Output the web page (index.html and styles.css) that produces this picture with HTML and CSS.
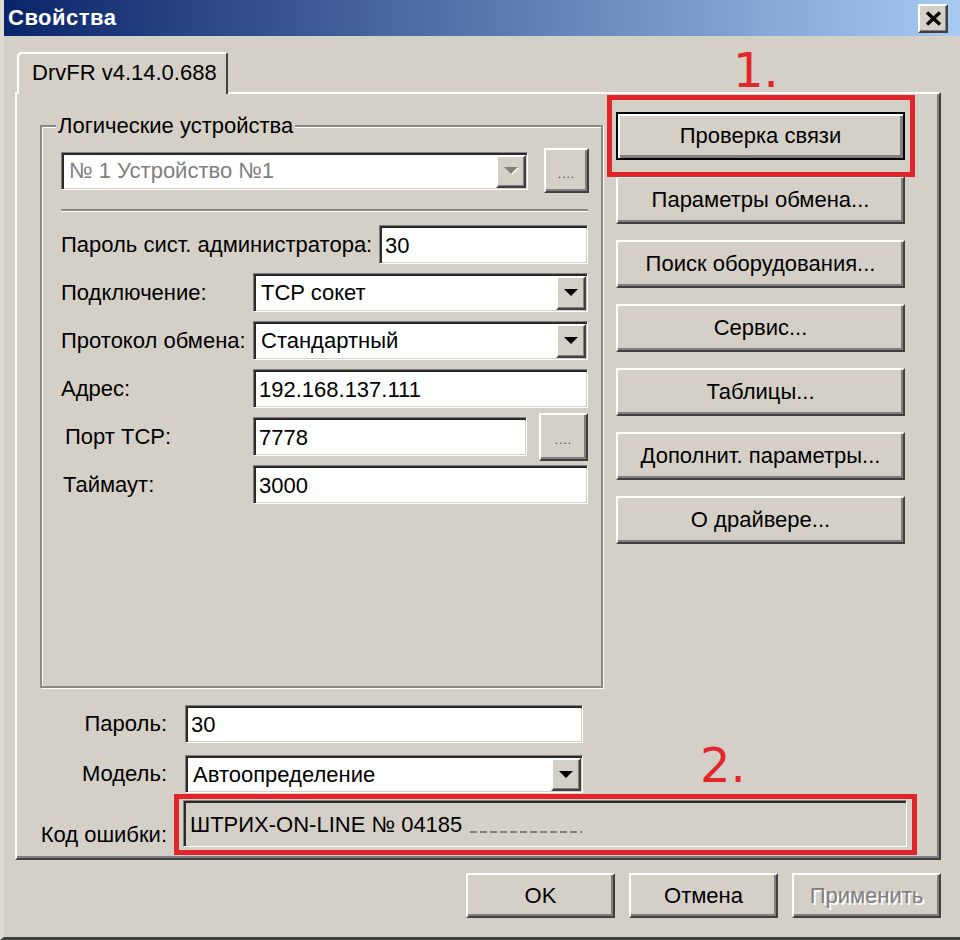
FILE: index.html
```html
<!DOCTYPE html>
<html lang="ru">
<head>
<meta charset="utf-8">
<title>Свойства</title>
<link rel="stylesheet" href="styles.css">
</head>
<body>
<div class="window">
  <div class="titlebar">
    <span class="title">Свойства</span>
    <button class="close" type="button" aria-label="Закрыть">
      <svg width="17" height="15" viewBox="0 0 17 15"><path d="M2 1.5L15 13.5M15 1.5L2 13.5" stroke="#000" stroke-width="3.4" fill="none"/></svg>
    </button>
  </div>
  <div class="client">
    <div class="tabs"><div class="tab">DrvFR v4.14.0.688</div></div>
    <div class="panel">
      <div class="panel-top">
        <div class="group">
          <span class="group-title">Логические устройства</span>
          <div class="devrow">
            <div class="combo disabled sunken">
              <span class="combo-text">№ 1 Устройство №1</span>
              <span class="combo-btn"><svg width="14" height="8" viewBox="0 0 14 8"><path d="M0 0H14L7 7Z" fill="#808080"/></svg></span>
            </div>
            <button class="btn dots" type="button">....</button>
          </div>
          <div class="sep"></div>
          <div class="frow first">
            <span class="flabel wide">Пароль сист. администратора:</span>
            <div class="edit sunken">30</div>
          </div>
          <div class="frow">
            <span class="flabel">Подключение:</span>
            <div class="combo sunken">
              <span class="combo-text">TCP сокет</span>
              <span class="combo-btn"><svg width="14" height="8" viewBox="0 0 14 8"><path d="M0 0H14L7 7Z" fill="#000"/></svg></span>
            </div>
          </div>
          <div class="frow">
            <span class="flabel">Протокол обмена:</span>
            <div class="combo sunken">
              <span class="combo-text">Стандартный</span>
              <span class="combo-btn"><svg width="14" height="8" viewBox="0 0 14 8"><path d="M0 0H14L7 7Z" fill="#000"/></svg></span>
            </div>
          </div>
          <div class="frow">
            <span class="flabel">Адрес:</span>
            <div class="edit sunken">192.168.137.111</div>
          </div>
          <div class="frow">
            <span class="flabel indent4">Порт TCP:</span>
            <div class="edit sunken">7778</div>
            <button class="btn dots port" type="button">....</button>
          </div>
          <div class="frow">
            <span class="flabel indent2">Таймаут:</span>
            <div class="edit sunken">3000</div>
          </div>
        </div>
        <div class="actions">
          <div class="hl hl1"><button class="btn default" type="button">Проверка связи</button></div>
          <button class="btn" type="button">Параметры обмена...</button>
          <button class="btn" type="button">Поиск оборудования...</button>
          <button class="btn" type="button">Сервис...</button>
          <button class="btn" type="button">Таблицы...</button>
          <button class="btn" type="button">Дополнит. параметры...</button>
          <button class="btn" type="button">О драйвере...</button>
        </div>
      </div>
      <div class="bottom">
        <div class="brow">
          <span class="blabel">Пароль:</span>
          <div class="edit sunken bedit">30</div>
        </div>
        <div class="brow second">
          <span class="blabel">Модель:</span>
          <div class="combo sunken bedit">
            <span class="combo-text">Автоопределение</span>
            <span class="combo-btn"><svg width="14" height="8" viewBox="0 0 14 8"><path d="M0 0H14L7 7Z" fill="#000"/></svg></span>
          </div>
        </div>
        <div class="brow third">
          <span class="blabel err">Код ошибки:</span>
          <div class="hl hl2">
            <div class="errfield sunken">ШТРИХ-ON-LINE № 04185<span class="redact"></span></div>
          </div>
        </div>
      </div>
    </div>
    <div class="footer">
      <button class="btn fbtn" type="button">OK</button>
      <button class="btn fbtn" type="button">Отмена</button>
      <button class="btn fbtn disabled-text" type="button">Применить</button>
    </div>
  </div>
  <div class="mark mark1">1.</div>
  <div class="mark mark2">2.</div>
</div>
</body>
</html>
```
FILE: styles.css
```css
* { box-sizing: border-box; }
html, body { margin: 0; padding: 0; }
body {
  width: 960px;
  height: 940px;
  overflow: hidden;
  background: #d4d0c8;
  font-family: "Liberation Sans", Arial, sans-serif;
  font-size: 22px;
  color: #000;
}
.window {
  position: relative;
  width: 960px;
  height: 940px;
  background: #d4d0c8;
  border-left: 4px solid #dedbd4;
  border-bottom: 3px solid #404040;
  display: flex;
  flex-direction: column;
}
.titlebar {
  flex: none;
  height: 36px;
  display: flex;
  align-items: center;
  justify-content: space-between;
  padding: 0 12px 0 4px;
  background: linear-gradient(90deg, #0a246a 0%, #a6caf0 100%);
}
.title {
  color: #fff;
  font-family: "Liberation Sans", Arial, sans-serif;
  font-weight: bold;
  font-size: 22px;
  letter-spacing: 0.5px;
}
.close {
  width: 30px;
  height: 29px;
  padding: 0;
  margin: 0;
  display: flex;
  align-items: center;
  justify-content: center;
  background: #d4d0c8;
  border: 2px solid;
  border-color: #fff #404040 #404040 #fff;
  box-shadow: inset -1px -1px 0 #808080;
}
.client {
  flex: 1;
  display: flex;
  flex-direction: column;
  padding: 16px 19px 0 11px;
}
.tabs {
  position: relative;
  z-index: 1;
  height: 40px;
  display: flex;
  padding-left: 2px;
}
.tab {
  width: 211px;
  height: 42px;
  border: 2px solid;
  border-bottom: none;
  border-color: #fff #404040 transparent #fff;
  border-top-left-radius: 5px;
  border-top-right-radius: 2px;
  background: #d4d0c8;
  padding-left: 13px;
  line-height: 38px;
  white-space: nowrap;
}
.panel {
  position: relative;
  height: 768px;
  border: 2px solid;
  border-color: #fff #404040 #404040 #fff;
  box-shadow: inset -2px -2px 0 #808080;
}
.panel-top {
  display: flex;
  align-items: flex-start;
}
.group {
  position: relative;
  flex: none;
  width: 563px;
  height: 563px;
  margin: 31px 0 0 23px;
  padding: 21px 13px 0 19px;
  border: 2px solid #8c8983;
  box-shadow: inset 1px 1px 0 #fff, 1px 1px 0 #fff;
}
.group-title {
  position: absolute;
  left: 14px;
  top: -13px;
  padding: 0 2px;
  line-height: 24px;
  background: #d4d0c8;
  white-space: nowrap;
}
.devrow {
  display: flex;
  align-items: center;
  height: 45px;
  gap: 16px;
}
.devrow .combo {
  flex: none;
  width: 467px;
  height: 38px;
}
.sep {
  margin-top: 16px;
  height: 3px;
  border-top: 2px solid #8c8983;
  border-bottom: 1px solid #fff;
}
.frow {
  display: flex;
  align-items: center;
  height: 39px;
  margin-top: 9px;
}
.frow.first { margin-top: 13px; }
.flabel {
  flex: none;
  width: 192px;
  white-space: nowrap;
}
.flabel.wide { width: 318px; }
.flabel.indent4 { padding-left: 4px; }
.flabel.indent2 { padding-left: 2px; }
.sunken {
  border: 1px solid;
  border-color: #808080 #fff #fff #808080;
  box-shadow: inset 2px 2px 0 #2a2a2a, inset -1px -1px 0 #d4d0c8;
  background: #fff;
}
.edit {
  flex: 1;
  height: 100%;
  display: flex;
  align-items: center;
  padding: 2px 0 0 5px;
  white-space: nowrap;
}
.combo {
  flex: 1;
  height: 100%;
  display: flex;
  align-items: stretch;
  padding: 2px 1px 1px 2px;
}
.combo-text {
  flex: 1;
  display: flex;
  align-items: center;
  padding-left: 5px;
  white-space: nowrap;
}
.combo.disabled .combo-text { color: #808080; }
.combo-btn {
  flex: none;
  width: 30px;
  display: flex;
  align-items: center;
  justify-content: center;
  background: #d4d0c8;
  border: 2px solid;
  border-color: #fff #404040 #404040 #fff;
  box-shadow: inset -1px -1px 0 #808080;
}
.combo.disabled .combo-btn svg { filter: drop-shadow(1px 1px 0 #fff); }
.btn {
  margin: 0;
  padding: 0;
  font-family: "Liberation Sans", Arial, sans-serif;
  font-size: 22px;
  color: #000;
  background: #d4d0c8;
  border: 2px solid;
  border-color: #fff #404040 #404040 #fff;
  box-shadow: inset -2px -2px 0 #808080;
  white-space: nowrap;
}
.btn.dots {
  flex: none;
  width: 45px;
  height: 45px;
  font-size: 12px;
  letter-spacing: 1px;
  color: #444;
  padding-top: 6px;
}
.btn.dots.port {
  width: 49px;
  height: 48px;
  margin-left: 12px;
}
.actions {
  flex: none;
  width: 289px;
  margin: 18px 0 0 13px;
  display: flex;
  flex-direction: column;
  gap: 16px;
}
.actions .btn {
  width: 289px;
  height: 48px;
}
.btn.default {
  border: 2px solid #000;
  box-shadow: inset 2px 2px 0 #fff, inset -3px -3px 0 #808080;
}
.hl { position: relative; }
.hl::after {
  content: "";
  position: absolute;
  border: 5px solid #e1252a;
  pointer-events: none;
}
.hl1::after { left: -9px; right: -10px; top: -17px; bottom: -17px; }
.hl2::after { left: -9px; right: -10px; top: -6px; bottom: -8px; }
.bottom { margin-top: 17px; }
.brow {
  display: flex;
  align-items: center;
  height: 38px;
}
.brow.second { margin-top: 12px; }
.brow.third { margin-top: 7px; height: 47px; }
.blabel {
  flex: none;
  width: 150px;
  margin-right: 18px;
  text-align: right;
  white-space: nowrap;
}
.blabel.err {
  align-self: flex-end;
  margin-right: 16px;
  line-height: 24px;
}
.bedit {
  flex: none;
  width: 398px;
}
.hl2 { width: 724px; height: 47px; }
.errfield {
  width: 100%;
  height: 100%;
  display: flex;
  align-items: center;
  padding: 2px 0 0 6px;
  background: #d4d0c8;
  white-space: nowrap;
}
.redact {
  display: inline-block;
  width: 112px;
  height: 2px;
  margin: 14px 0 0 8px;
  background: repeating-linear-gradient(90deg, #6a6a6a 0 7px, transparent 7px 10px);
  opacity: 0.8;
}
.footer {
  display: flex;
  justify-content: flex-end;
  gap: 14px;
  margin-top: 13px;
}
.fbtn {
  width: 149px;
  height: 45px;
}
.disabled-text {
  color: #808080;
  text-shadow: 2px 2px 0 #fff;
}
.mark {
  position: absolute;
  font-family: "DejaVu Sans", sans-serif;
  font-size: 48px;
  line-height: 48px;
  color: #e1252a;
}
.mark1 { left: 729px; top: 46px; }
.mark2 { left: 696px; top: 741px; }
```
